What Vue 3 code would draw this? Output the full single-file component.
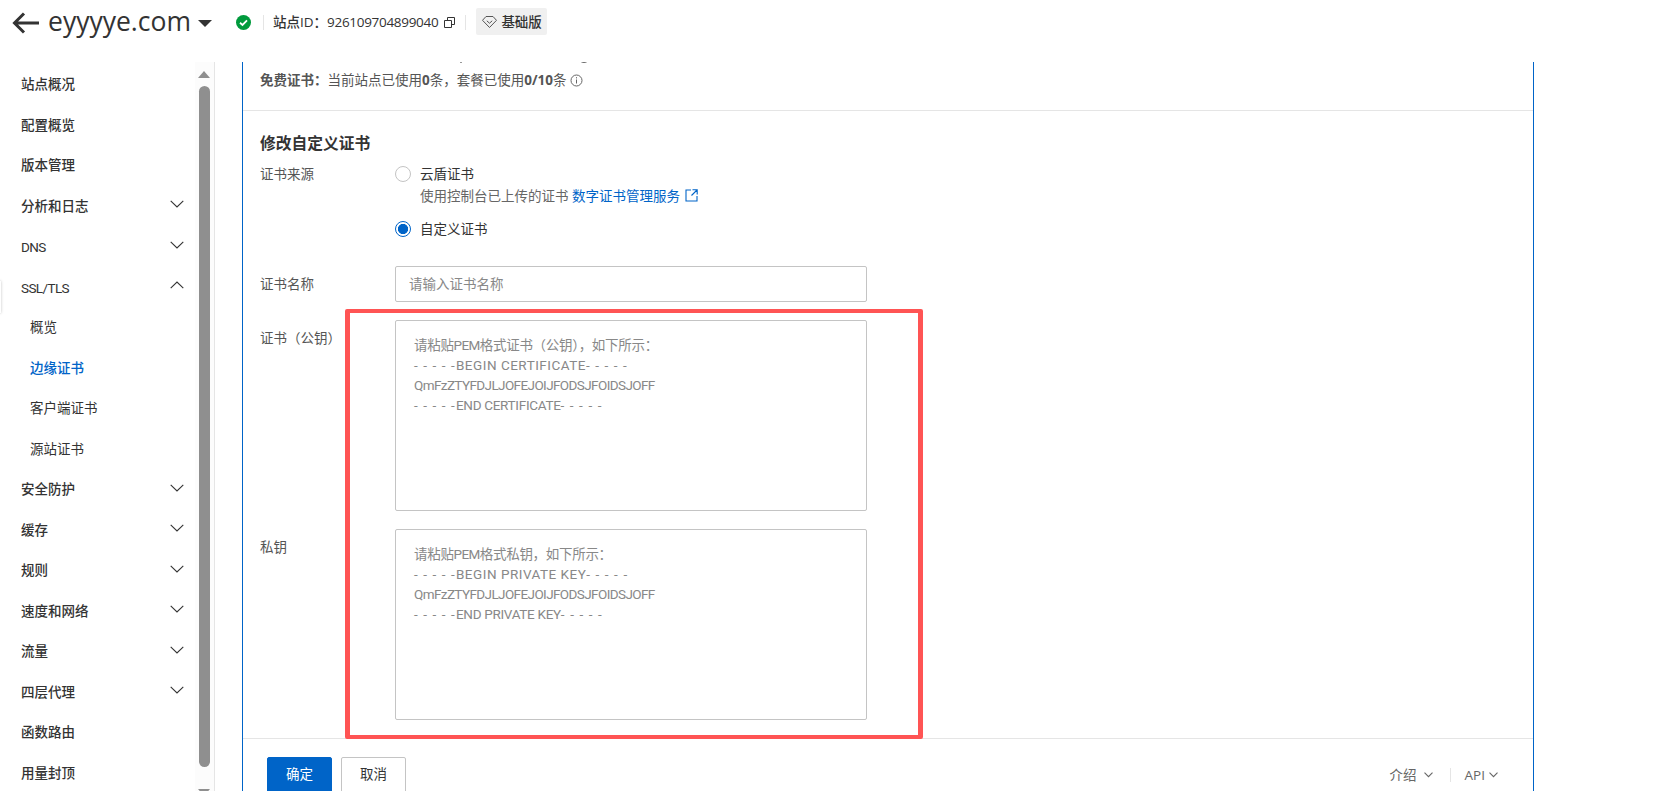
<script setup>
const navItems = [
  { label: '站点概况', strong: true },
  { label: '配置概览', strong: true },
  { label: '版本管理', strong: true },
  { label: '分析和日志', strong: true, arrow: 'down' },
  { label: 'DNS', latin: true, arrow: 'down' },
  { label: 'SSL/TLS', latin: true, arrow: 'up' },
  { label: '概览', sub: true },
  { label: '边缘证书', sub: true, active: true },
  { label: '客户端证书', sub: true },
  { label: '源站证书', sub: true },
  { label: '安全防护', strong: true, arrow: 'down' },
  { label: '缓存', strong: true, arrow: 'down' },
  { label: '规则', strong: true, arrow: 'down' },
  { label: '速度和网络', strong: true, arrow: 'down' },
  { label: '流量', strong: true, arrow: 'down' },
  { label: '四层代理', strong: true, arrow: 'down' },
  { label: '函数路由', strong: true },
  { label: '用量封顶', strong: true }
]
const dashes = '- - - - -'
const keyBoxes = [
  { label: '证书\uFF08公钥\uFF09', rest: '格式证书\uFF08公钥\uFF09\uFF0C如下所示\uFF1A', begin: 'BEGIN CERTIFICATE', end: 'END CERTIFICATE' },
  { label: '私钥', rest: '格式私钥\uFF0C如下所示\uFF1A', begin: 'BEGIN PRIVATE KEY', end: 'END PRIVATE KEY' }
]
const sample = 'QmFzZTYFDJLJOFEJOIJFODSJFOIDSJOFF'
</script>

<template>
  <div class="page">
    <header class="topbar">
      <svg class="back" width="27" height="22" viewBox="0 0 27 22" fill="none">
        <path d="M12 1.500 2.500 11l9.500 9.500M3 11h24" stroke="#333" stroke-width="3" />
      </svg>
      <span class="domain">eyyyye.com</span>
      <span class="caret"></span>
      <svg class="status" width="15" height="15" viewBox="0 0 15 15">
        <circle cx="7.500" cy="7.500" r="7.500" fill="#009a3c" />
        <path d="M4 7.800 6.500 10 11 5.400" fill="none" stroke="#fff" stroke-width="1.800" />
      </svg>
      <span class="vline first"></span>
      <span class="site-id">站点ID&#xFF1A;<span class="digits">926109704899040</span></span>
      <svg class="copy" width="11" height="11" viewBox="0 0 11 11" fill="none" stroke="#333" stroke-width="1">
        <path d="M.5 3.500h7v7h-7zM3.500 3.500v-3h7v7h-3" />
      </svg>
      <span class="vline second"></span>
      <span class="plan">
        <svg width="15" height="12" viewBox="0 0 15 12" fill="none" stroke="#555" stroke-width="1">
          <path d="M4 .5h7l3.500 3.800-7 7.200-7-7.200zM4.800 4.800l2.700 2.400 2.700-2.400" />
        </svg>
        基础版
      </span>
    </header>

    <div class="body">
      <aside class="sidebar">
        <div
          v-for="item in navItems"
          :key="item.label"
          class="nav-item"
          :class="{ strong: item.strong, sub: item.sub, active: item.active, latin: item.latin }"
        >
          <span class="nav-text">{{ item.label }}</span>
          <svg v-if="item.arrow" class="chev" width="14" height="8" viewBox="0 0 14 8" fill="none" stroke="#333" stroke-width="1.100">
            <path :d="item.arrow === 'down' ? 'M.7.8 7 7l6.300-6.200' : 'M.7 7.200 7 1l6.300 6.200'" />
          </svg>
        </div>
        <div class="scrollbar">
          <span class="sb-up"></span>
          <span class="sb-thumb"></span>
          <span class="sb-down"></span>
        </div>
        <span class="edge-tab"></span>
      </aside>

      <main class="content">
        <section class="panel">
          <div class="cut-text">
            <span class="cut-dot"></span>
            <span class="cut-arc"></span>
          </div>
          <div class="notice">
            <b>免费证书&#xFF1A;</b>当前站点已使用<b>0</b>条&#xFF0C;套餐已使用<b>0/10</b>条
            <svg class="info" width="13" height="13" viewBox="0 0 13 13" fill="none" stroke="#666">
              <circle cx="6.500" cy="6.500" r="5.500" />
              <path d="M6.500 5.500v4M6.500 3.200v1.200" />
            </svg>
          </div>

          <form class="form" @submit.prevent>
            <h2 class="title">修改自定义证书</h2>

            <div class="row source">
              <label class="label">证书来源</label>
              <div class="options">
                <div class="radio-line">
                  <span class="radio"></span>
                  <span class="radio-text">云盾证书</span>
                </div>
                <div class="radio-desc">
                  使用控制台已上传的证书 <a class="link">数字证书管理服务</a>
                  <svg width="13" height="13" viewBox="0 0 13 13" fill="none" stroke="#0064c8" stroke-width="1.100">
                    <path d="M6 1H1v11h11V7M7.500.8h4.700v4.700M12 1 6.500 6.500" />
                  </svg>
                </div>
                <div class="radio-line checked-line">
                  <span class="radio checked"></span>
                  <span class="radio-text">自定义证书</span>
                </div>
              </div>
            </div>

            <div class="row name">
              <label class="label">证书名称</label>
              <input class="input" placeholder="请输入证书名称" />
            </div>

            <div v-for="box in keyBoxes" :key="box.label" class="row key">
              <label class="label">{{ box.label }}</label>
              <div class="area">
                <div class="cn">请粘贴<span class="latin">PEM</span>{{ box.rest }}</div>
                <div class="latin"><span class="dash">{{ dashes }}</span><span class="mid">{{ box.begin }}</span><span class="dash">{{ dashes }}</span></div>
                <div class="latin">{{ sample }}</div>
                <div class="latin"><span class="dash">{{ dashes }}</span><span class="mid-end">{{ box.end }}</span><span class="dash">{{ dashes }}</span></div>
              </div>
            </div>
          </form>

          <footer class="footer">
            <button class="btn primary" type="button"><span>确定</span></button>
            <button class="btn" type="button"><span>取消</span></button>
            <div class="help">
              <span class="help-item intro">介绍
                <svg width="9" height="6" viewBox="0 0 9 6" fill="none" stroke="#666" stroke-width="1.100"><path d="M.5.7 4.500 4.700 8.500.7" /></svg>
              </span>
              <span class="help-sep"></span>
              <span class="help-item">API
                <svg width="9" height="6" viewBox="0 0 9 6" fill="none" stroke="#666" stroke-width="1.100"><path d="M.5.7 4.500 4.700 8.500.7" /></svg>
              </span>
            </div>
          </footer>

          <div class="callout"></div>
        </section>
      </main>
    </div>
  </div>
</template>

<style>
html, body { margin: 0; background: #fff; overflow: hidden; }
</style>

<style scoped>
.page {
  width: 1655px;
  height: 791px;
  display: flex;
  flex-direction: column;
  overflow: hidden;
  background: #fff;
  color: #333;
  font-family: "Open Sans", "Noto Sans CJK SC", sans-serif;
  font-size: 13.5px;
  line-height: 20px;
}
.topbar {
  height: 62px;
  flex: none;
  box-sizing: border-box;
  padding: 8px 0 0 12px;
  display: flex;
  align-items: flex-start;
}
.back { margin-top: 4px; }
.domain {
  margin: -1px 0 0 9px;
  font-size: 26.5px;
  line-height: 28px;
  color: #333;
}
.caret {
  margin: 12px 0 0 7px;
  border-left: 7.500px solid transparent;
  border-right: 7.500px solid transparent;
  border-top: 7px solid #333;
}
.status { margin: 7px 0 0 24px; }
.vline { width: 1px; height: 15px; background: #e5e5e5; margin-top: 7px; }
.vline.first { margin-left: 12px; }
.vline.second { margin-left: 10px; }
.site-id { margin: 4px 0 0 9px; font-weight: 500; }
.digits { font-weight: 400; letter-spacing: -.3px; }
.copy { margin: 9px 0 0 6px; }
.plan {
  margin-left: 10px;
  width: 71px;
  height: 27px;
  box-sizing: border-box;
  padding-left: 6px;
  display: flex;
  align-items: center;
  gap: 4px;
  background: #f0f0f0;
  border-radius: 2px;
  font-weight: 500;
}

.body { flex: 1; min-height: 0; display: flex; }
.sidebar {
  position: relative;
  width: 215px;
  flex: none;
  box-sizing: border-box;
  border-right: 1px solid #e5e5e5;
  padding-top: 2.750px;
}
.nav-item {
  height: 40.500px;
  box-sizing: border-box;
  padding-left: 21px;
  display: flex;
  align-items: center;
  position: relative;
}
.nav-text { padding-bottom: 2px; }
.nav-item.latin .nav-text { padding-bottom: 0; }
.nav-item.strong { font-weight: 500; }
.nav-item.sub { padding-left: 30px; }
.nav-item.active { color: #0064c8; font-weight: 500; }
.chev { position: absolute; left: 170px; top: 14px; }
.scrollbar {
  position: absolute;
  left: 195px;
  top: 0;
  bottom: 0;
  width: 19px;
  background: #fcfcfc;
}
.sb-up, .sb-down {
  position: absolute;
  left: 3px;
  border-left: 6.500px solid transparent;
  border-right: 6.500px solid transparent;
}
.sb-up { top: 9px; border-bottom: 7px solid #8f8f8f; }
.sb-down { top: 727px; border-top: 7px solid #8f8f8f; }
.sb-thumb {
  position: absolute;
  left: 4px;
  top: 24px;
  width: 11px;
  height: 681px;
  background: #8f8f8f;
  border-radius: 6px;
}
.edge-tab {
  position: absolute;
  left: -2px;
  top: 219px;
  width: 3px;
  height: 32px;
  background: #fff;
  box-shadow: 0 0 3px rgba(0, 0, 0, .25);
}

.content { flex: 1; min-width: 0; padding-left: 27px; }
.panel {
  position: relative;
  width: 1292px;
  height: 729px;
  box-sizing: border-box;
  border-left: 1px solid #0064c8;
  border-right: 1px solid #0064c8;
  display: flex;
  flex-direction: column;
  overflow: hidden;
}
.cut-text { position: absolute; left: 0; top: 0; width: 100%; height: 2px; overflow: hidden; }
.cut-dot { position: absolute; left: 217px; top: 0; width: 2px; height: 1px; background: #999; }
.cut-arc {
  position: absolute;
  left: 335px;
  top: -11px;
  width: 10px;
  height: 10px;
  border: 1px solid #666;
  border-radius: 50%;
}
.notice {
  height: 49px;
  flex: none;
  box-sizing: border-box;
  padding: 8px 0 0 17px;
  border-bottom: 1px solid #e5e5e5;
  color: #555;
  white-space: nowrap;
}
.notice b { font-weight: 700; }
.info { vertical-align: -2px; margin-left: 0; }

.form {
  height: 628px;
  flex: none;
  box-sizing: border-box;
  padding: 20px 17px 0;
  border-bottom: 1px solid #e5e5e5;
  margin: 0;
}
.title {
  margin: 0;
  font-size: 15.750px;
  line-height: 24px;
  font-weight: 700;
  color: #333;
}
.row { display: flex; }
.label { width: 135px; flex: none; color: #555; }
.source { margin-top: 10px; }
.source .label { margin-top: -1px; }
.options { display: flex; flex-direction: column; margin-top: -1px; }
.radio-line { display: flex; align-items: center; gap: 9px; height: 20px; }
.radio-text { padding-bottom: 1px; }
.radio {
  width: 16px;
  height: 16px;
  box-sizing: border-box;
  border: 1px solid #c4c4c4;
  border-radius: 50%;
  background: #fff;
}
.radio.checked {
  border-color: #0064c8;
  background: radial-gradient(circle, #0064c8 0 4.800px, #fff 5.400px);
}
.radio-desc {
  margin: 2px 0 0 25px;
  height: 20px;
  color: #666;
  white-space: nowrap;
}
.link { color: #0064c8; }
.radio-desc svg { margin-left: 5px; vertical-align: -1px; }
.checked-line { margin-top: 13px; }
.name { margin-top: 27px; align-items: center; }
.name .label { margin-top: -1px; }
.input {
  width: 472px;
  height: 36px;
  box-sizing: border-box;
  border: 1px solid #c4c4c4;
  border-radius: 2px;
  padding: 0 13px;
  font: inherit;
  color: #333;
  outline: none;
}
.input::placeholder { color: #888; opacity: 1; }
.key { margin-top: 18px; }
.key .label { padding-top: 8px; }
.area {
  width: 472px;
  height: 191px;
  box-sizing: border-box;
  border: 1px solid #c4c4c4;
  border-radius: 2px;
  padding: 14px 18px;
  color: #888;
}
.latin { font-family: Roboto, sans-serif; font-size: 13.500px; letter-spacing: -.6px; white-space: pre; }
.dash { letter-spacing: 1.100px; }
.mid { letter-spacing: .5px; }
.mid-end { letter-spacing: -.3px; }
.cn { letter-spacing: -.3px; white-space: nowrap; }

.footer { flex: none; display: flex; padding: 18px 0 0 24px; gap: 9px; position: relative; }
.btn {
  width: 65px;
  height: 36px;
  box-sizing: border-box;
  border: 1px solid #c4c4c4;
  border-radius: 2px;
  background: #fff;
  color: #333;
  font: inherit;
  padding: 0 0 2px;
}
.btn.primary { background: #0064c8; border-color: #0064c8; color: #fff; }
.help {
  margin-left: auto;
  margin-right: 35px;
  height: 36px;
  display: flex;
  align-items: center;
  color: #666;
}
.help-item { display: flex; align-items: center; gap: 4px; }
.help-item.intro { gap: 7px; }
.help-sep { width: 1px; height: 14px; background: #e5e5e5; margin: 0 14px 0 17px; }

.callout {
  position: absolute;
  left: 102px;
  top: 247px;
  width: 578px;
  height: 430px;
  box-sizing: border-box;
  border-style: solid;
  border-color: #ff5454;
  border-width: 4.500px 5px;
  border-radius: 2px;
  pointer-events: none;
}
</style>
